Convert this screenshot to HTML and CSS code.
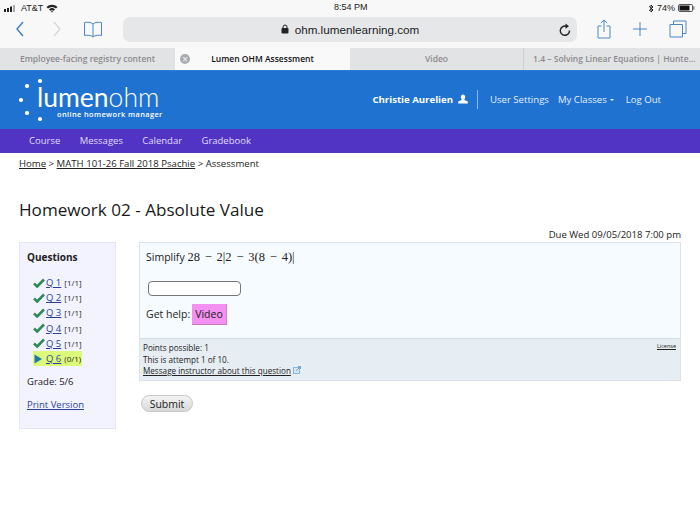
FILE: index.html
```
<!DOCTYPE html>
<html lang="en">
<head>
<meta charset="utf-8">
<title>Lumen OHM Assessment</title>
<link rel="stylesheet" href="styles.css">
</head>
<body>
<div class="chrome">
  <div class="status">
    <div class="status-left">
      <svg class="signal" width="14" height="7" viewBox="0 0 14 7"><rect x="0" y="4" width="2" height="3" fill="#222"/><rect x="3" y="3" width="2" height="4" fill="#222"/><rect x="6" y="1.5" width="2" height="5.5" fill="#222"/><rect x="9" y="0" width="2" height="7" fill="#aaa"/></svg>
      <span>AT&amp;T</span>
      <svg width="12" height="9" viewBox="0 0 12 9"><path d="M0.5 3 A8 8 0 0 1 11.5 3 L10 4.5 A6 6 0 0 0 2 4.5Z M3 5.4 A4.5 4.5 0 0 1 9 5.4 L7.6 6.8 A2.5 2.5 0 0 0 4.4 6.8Z M5 7.5 A1.5 1.5 0 0 1 7 7.5 L6 8.7Z" fill="#222"/></svg>
    </div>
    <div class="status-time">8:54 PM</div>
    <div class="status-right">
      <svg width="6" height="9" viewBox="0 0 6 9"><path d="M1 2.2 L5 6 L3 8 V1 L5 3 L1 6.8" fill="none" stroke="#222" stroke-width="1"/></svg>
      <span>74%</span>
      <svg width="17" height="8" viewBox="0 0 17 8"><rect x="0.5" y="0.5" width="14" height="7" rx="1.5" fill="#fff" stroke="#555"/><rect x="1.5" y="1.5" width="10" height="5" fill="#111"/><rect x="15.2" y="2.5" width="1.3" height="3" fill="#777"/></svg>
    </div>
  </div>
  <div class="toolbar">
    <div class="nav-icons">
      <svg width="10" height="18" viewBox="0 0 10 18"><path d="M8 2 L2 9 L8 16" fill="none" stroke="#3d7ec4" stroke-width="1.4"/></svg>
      <svg class="fwd" width="10" height="18" viewBox="0 0 10 18"><path d="M2 2 L8 9 L2 16" fill="none" stroke="#d3d5d8" stroke-width="1.2"/></svg>
      <svg class="book" width="20" height="17" viewBox="0 0 20 17"><path d="M10 3 C8 1 4 1 1.5 1.5 V14.5 C4 14 8 14 10 16 C12 14 16 14 18.5 14.5 V1.5 C16 1 12 1 10 3 V16" fill="none" stroke="#4a86c6" stroke-width="1"/></svg>
    </div>
    <div class="address">
      <div class="url">
        <svg width="8" height="10" viewBox="0 0 8 10"><path d="M2 4.5 V3 a2 2 0 0 1 4 0 V4.5" fill="none" stroke="#222"/><rect x="0.5" y="4" width="7" height="5.5" rx="1" fill="#222"/></svg>
        <span>ohm.lumenlearning.com</span>
      </div>
      <svg class="reload" width="12" height="13" viewBox="0 0 12 13"><path d="M10.5 7.5 A4.6 4.6 0 1 1 7 3.2" fill="none" stroke="#222" stroke-width="1.4"/><path d="M6.5 0.5 L10 3.2 L6.5 5.8Z" fill="#222"/></svg>
    </div>
    <div class="tool-icons">
      <svg width="14" height="20" viewBox="0 0 14 20"><path d="M4.5 7 H1 V19 H13 V7 H9.5 M7 13 V1 M3.8 4 L7 1 L10.2 4" fill="none" stroke="#4a86c6" stroke-width="1"/></svg>
      <svg width="16" height="16" viewBox="0 0 16 16"><path d="M8 1 V15 M1 8 H15" stroke="#4a86c6" stroke-width="1"/></svg>
      <svg width="18" height="18" viewBox="0 0 18 18"><path d="M4.5 4.5 V1 H17 V13.5 H13.5 M1 4.5 H13.5 V17 H1Z" fill="none" stroke="#4a86c6" stroke-width="1"/></svg>
    </div>
  </div>
  <div class="tabs">
    <div class="tab t1">Employee-facing registry content</div>
    <div class="tab active"><span class="tab-close">×</span><span>Lumen OHM Assessment</span></div>
    <div class="tab t3">Video</div>
    <div class="tab t4">1.4 – Solving Linear Equations | Hunte...</div>
  </div>
</div>
<header class="brand">
  <div class="logo">
    <div class="dots"><i class="d1"></i><i class="d2"></i><i class="d3"></i><i class="d4"></i><i class="d5"></i></div>
    <div class="wordmark">
      <div class="logo-name"><b>lumen</b>ohm</div>
      <div class="logo-sub">online homework manager</div>
    </div>
  </div>
  <div class="user-nav">
    <span class="user-name">Christie Aurelien</span>
    <svg width="10" height="10" viewBox="0 0 10 10"><path d="M5 0.5 a2.3 2.6 0 0 1 1.4 4.6 v0.8 L9.8 7.6 V9.5 H0.2 V7.6 L3.6 5.9 V5.1 A2.3 2.6 0 0 1 5 0.5Z" fill="#fff"/></svg>
    <span class="sep"></span>
    <span>User Settings</span>
    <span class="classes">My Classes<i class="caret"></i></span>
    <span class="logout">Log Out</span>
  </div>
</header>
<nav class="menu">
  <span>Course</span><span>Messages</span><span>Calendar</span><span>Gradebook</span>
</nav>
<main class="page">
  <div class="crumbs"><a href="#">Home</a> &gt; <a href="#">MATH 101-26 Fall 2018 Psachie</a> &gt; Assessment</div>
  <h1>Homework 02 - Absolute Value</h1>
  <div class="due">Due Wed 09/05/2018 7:00 pm</div>
  <div class="columns">
    <aside class="side">
      <h2>Questions</h2>
      <ul class="qlist">
        <li><svg class="check" viewBox="0 0 12 10"><path d="M1 5.5 L4.2 8.5 L11 1.5" fill="none" stroke="#2e8b57" stroke-width="2.6"/></svg><a href="#">Q 1</a><small>[1/1]</small></li>
        <li><svg class="check" viewBox="0 0 12 10"><path d="M1 5.5 L4.2 8.5 L11 1.5" fill="none" stroke="#2e8b57" stroke-width="2.6"/></svg><a href="#">Q 2</a><small>[1/1]</small></li>
        <li><svg class="check" viewBox="0 0 12 10"><path d="M1 5.5 L4.2 8.5 L11 1.5" fill="none" stroke="#2e8b57" stroke-width="2.6"/></svg><a href="#">Q 3</a><small>[1/1]</small></li>
        <li><svg class="check" viewBox="0 0 12 10"><path d="M1 5.5 L4.2 8.5 L11 1.5" fill="none" stroke="#2e8b57" stroke-width="2.6"/></svg><a href="#">Q 4</a><small>[1/1]</small></li>
        <li><svg class="check" viewBox="0 0 12 10"><path d="M1 5.5 L4.2 8.5 L11 1.5" fill="none" stroke="#2e8b57" stroke-width="2.6"/></svg><a href="#">Q 5</a><small>[1/1]</small></li>
        <li class="current"><svg class="check" viewBox="0 0 12 10"><path d="M1.5 0.5 L9 5 L1.5 9.5Z" fill="#1f7a9c"/></svg><a href="#">Q 6</a><small>(0/1)</small></li>
      </ul>
      <p class="grade">Grade: 5/6</p>
      <a class="print" href="#">Print Version</a>
    </aside>
    <div class="content">
      <section class="question">
        <div class="qbody">
          <p class="prompt">Simplify <span class="math">28 − 2|2 − 3(8 − 4)|</span></p>
          <input class="answer" type="text" aria-label="Answer">
          <p class="help"><span>Get help:</span><span class="video">Video</span></p>
        </div>
        <div class="qfoot">
          <div class="license">License</div>
          <div>Points possible: 1</div>
          <div>This is attempt 1 of 10.</div>
          <div class="msg"><a href="#">Message instructor about this question</a>
            <svg width="8" height="8" viewBox="0 0 8 8"><rect x="0.5" y="1.5" width="6" height="6" fill="#d5e6f5" stroke="#8db6dc"/><path d="M3 5 L7.5 0.5 M5 0.5 H7.5 V3" fill="none" stroke="#6da3d4"/></svg>
          </div>
        </div>
      </section>
      <button class="submit" type="button">Submit</button>
    </div>
  </div>
</main>
</body>
</html>
```
FILE: styles.css
```
* { box-sizing: border-box; }
html, body { margin: 0; padding: 0; }
body { width: 700px; height: 525px; overflow: hidden; background: #fff; font-family: "Open Sans", sans-serif; color: #222; font-size: 9.6px; }
.chrome { background: #f8f8f9; height: 70px; display: flex; flex-direction: column; }
.status { height: 16px; display: flex; align-items: center; justify-content: space-between; padding: 0 4px; font-family: "Liberation Sans", sans-serif; font-size: 9px; position: relative; }
.status-left, .status-right { display: flex; align-items: center; gap: 3px; }
.status-time { position: absolute; left: 334px; top: 2px; font-size: 9px; }
.status-right { padding-right: 1px; }
.toolbar { height: 32px; display: flex; align-items: center; padding-bottom: 6px; }
.nav-icons { width: 123px; display: flex; align-items: center; padding-left: 15px; }
.nav-icons .fwd { margin-left: 27px; }
.nav-icons .book { margin-left: 21px; }
.address { width: 454px; height: 25px; background: #e6e7e9; border-radius: 7px; display: flex; align-items: center; position: relative; }
.url { flex: 1; display: flex; justify-content: center; align-items: center; gap: 6px; font-family: "Liberation Sans", sans-serif; font-size: 11.7px; }
.reload { position: absolute; right: 6px; top: 6px; }
.tool-icons { display: flex; align-items: center; padding-left: 20px; gap: 21px; }
.tabs { height: 22px; display: flex; font-size: 8.5px; font-weight: 600; color: #8a8a8c; background: #e2e3e5; }
.tab { display: flex; align-items: center; justify-content: center; padding-bottom: 1px; }
.t1 { width: 175px; }
.active { width: 175px; background: #f9f9fa; color: #111; position: relative; }
.tab-close { position: absolute; left: 5px; top: 6px; width: 10px; height: 10px; border-radius: 50%; background: #a9abae; color: #eee; font-size: 10px; line-height: 10px; text-align: center; }
.t3 { width: 174px; border-right: 1px solid #cfd0d2; }
.t4 { width: 176px; justify-content: flex-start; padding-left: 9px; white-space: nowrap; }
.brand { height: 59px; background: #1f72cf; color: #fff; display: flex; justify-content: space-between; border-top: 1px solid #2b7cd3; }
.logo { display: flex; position: relative; padding-left: 37px; }
.dots { position: absolute; left: 0; top: 0; }
.dots i { position: absolute; width: 3.5px; height: 3.5px; border-radius: 50%; background: #fff; }
.d1 { left: 38px; top: 8px; }
.d2 { left: 25px; top: 13px; }
.d3 { left: 19px; top: 27px; }
.d4 { left: 25px; top: 40px; }
.d5 { left: 38px; top: 46px; }
.wordmark { padding-top: 14px; }
.logo-name { font-family: "Lato", sans-serif; font-weight: 300; font-size: 26.5px; line-height: 24px; }
.logo-name b { font-weight: 400; }
.logo-sub { font-size: 7.4px; font-weight: 600; letter-spacing: 0.4px; line-height: 9px; padding-left: 20px; margin-top: 1px; white-space: nowrap; }
.user-nav { display: flex; align-items: center; height: 56px; padding-right: 39px; font-size: 9.6px; color: #e4eefa; }
.user-name { font-weight: 700; font-size: 9.6px; color: #fff; margin-right: 5px; }
.sep { width: 1px; height: 19px; background: #8cb9ea; margin: 0 12px 0 9px; }
.classes { margin-left: 9px; display: flex; align-items: center; }
.caret { width: 0; height: 0; border: 2.5px solid transparent; border-top-color: #fff; margin: 3px 0 0 3px; }
.logout { margin-left: 12px; }
.menu { height: 24px; background: #5134c4; color: #e0dcf5; display: flex; align-items: center; gap: 19.4px; padding: 0 0 1px 29px; font-size: 9.5px; }
.page { padding: 0 19px; }
.crumbs { font-size: 9.6px; line-height: 14px; margin-top: 4px; }
.crumbs a, .msg a { color: #222; }
h1 { font-size: 17.1px; font-weight: 400; line-height: 24px; margin: 27px 0 0; color: #1a1a1a; }
.due { text-align: right; line-height: 14px; margin-top: 6px; font-size: 9.55px; }
.columns { display: flex; gap: 23px; align-items: flex-start; }
.side { width: 97px; height: 187px; background: #f3f3ff; border: 1px solid #e3e6f3; padding: 0 7px; flex: none; font-size: 9.5px; }
h2 { font-size: 10px; font-weight: 700; margin: 7px 0 0; line-height: 14px; }
.qlist { list-style: none; margin: 11px 0 0; padding: 0 0 0 6px; }
.qlist li { height: 15.2px; display: flex; align-items: center; width: fit-content; padding-right: 1px; }
.qlist a { color: #2a3f9c; font-size: 9.5px; white-space: pre; }
.qlist small { font-size: 8px; margin-left: 3px; }
.check { width: 12px; height: 10px; margin-right: 1px; flex: none; }
.current { background: #dcfa7a; }
.grade { margin: 9px 0 0; line-height: 14px; }
.print { display: block; margin-top: 9px; color: #2a3f9c; line-height: 14px; }
.content { width: 542px; }
.question { border: 1px solid #dde3ea; }
.qbody { height: 95px; background: #f6fbff; padding: 7px 6px 0; font-size: 10.5px; }
.prompt { margin: 0; line-height: 14px; }
.math { font-family: "Liberation Serif", serif; font-size: 12.5px; word-spacing: 1.7px; }
.answer { display: block; width: 93px; height: 15px; margin: 17px 0 0 2px; border: 1px solid #777; border-radius: 4px; background: #fff; padding: 0; }
.help { margin: 8px 0 0; display: flex; align-items: center; gap: 2px; height: 20px; }
.video { display: inline-block; background: #f490ef; border-bottom: 1px solid #c577c0; border-right: 1px solid #d184cc; padding: 2px 3px; line-height: 16px; color: #222; }
.qfoot { height: 42px; background: #e6eef3; border-top: 1px solid #d6dde3; padding: 3px 3px 0; font-size: 8.15px; line-height: 11.5px; position: relative; }
.license { position: absolute; right: 4px; top: 4px; font-size: 5.5px; text-decoration: underline; line-height: 7px; }
.submit { display: block; margin: 14px 0 0 2px; width: 52px; height: 17px; border-radius: 9px; border: 1px solid #c6c6c6; background: linear-gradient(#f4f4f4, #d8d8d8); font: 10.5px "Open Sans", sans-serif; color: #222; padding: 0; }
```
